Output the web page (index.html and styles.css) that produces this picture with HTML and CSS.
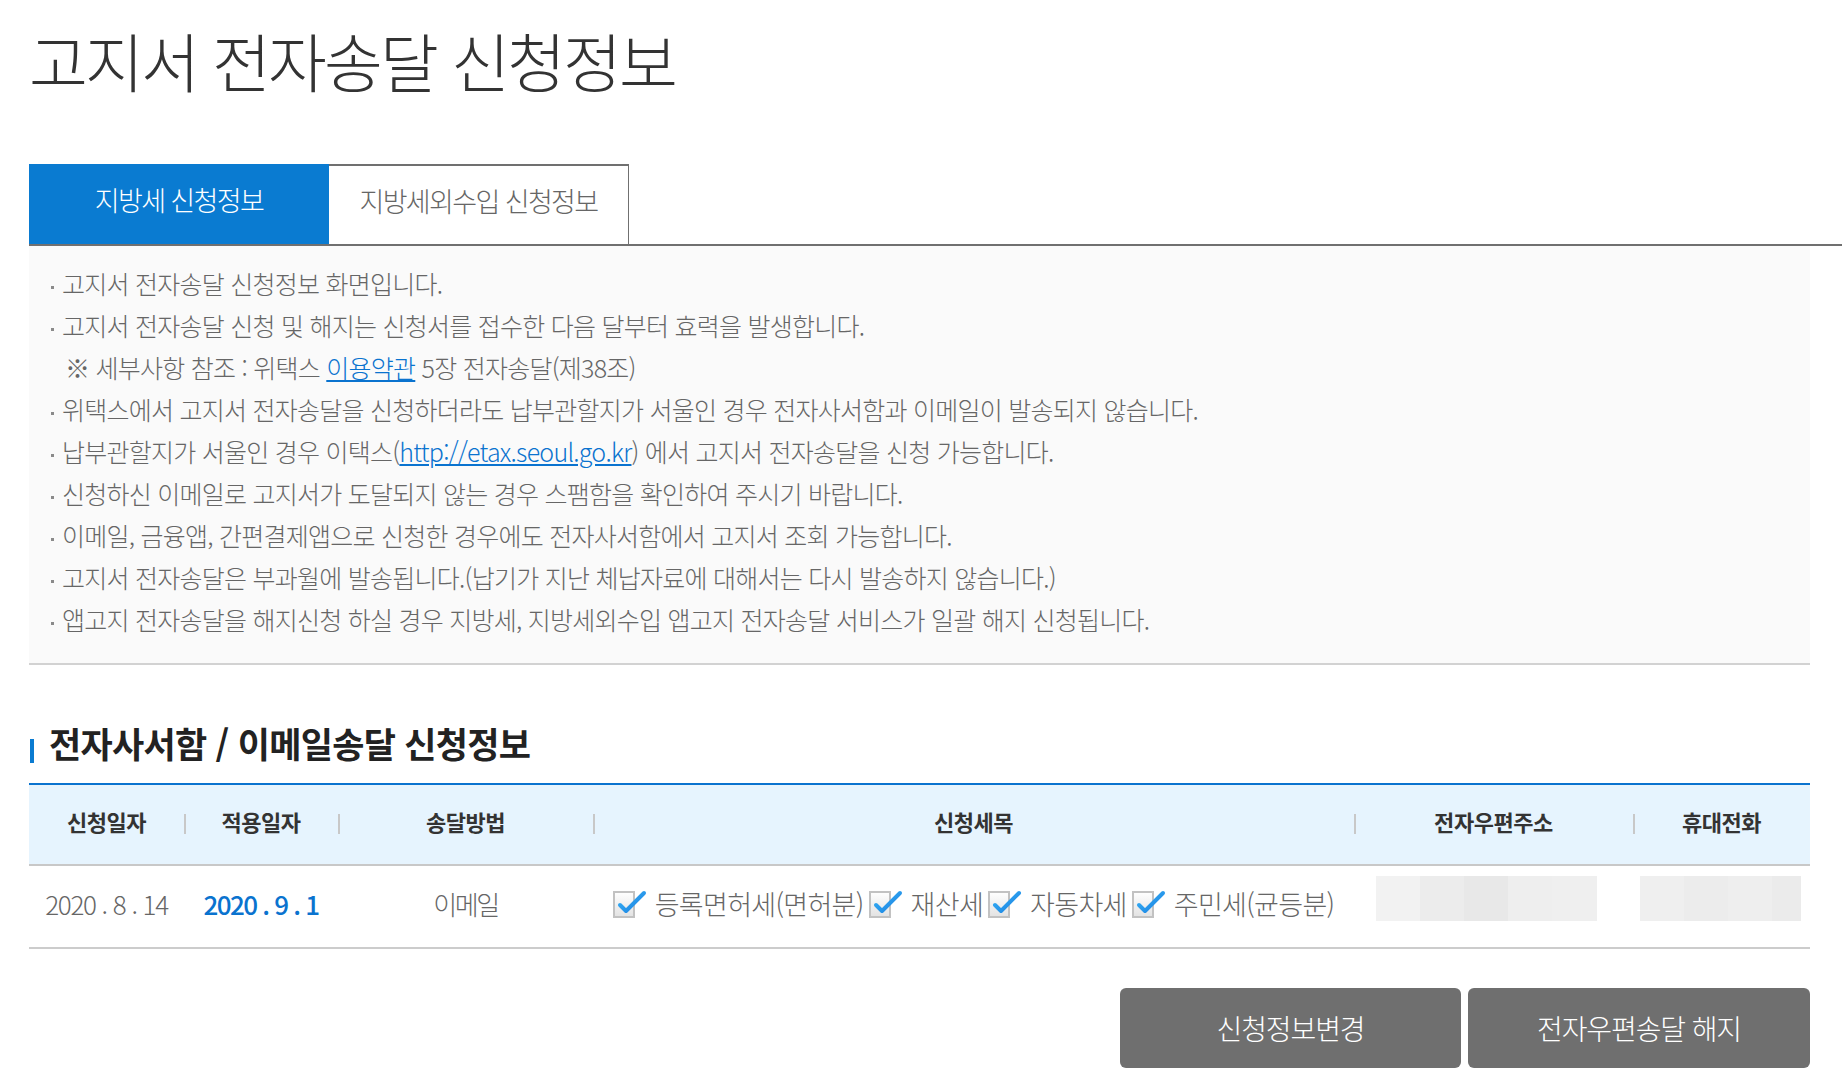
FILE: index.html
```html
<!DOCTYPE html>
<html lang="ko">
<head>
<meta charset="utf-8">
<title>고지서 전자송달 신청정보</title>
<link rel="stylesheet" href="styles.css">
</head>
<body>
<div class="wrap">
  <h1 class="page-title">고지서 전자송달 신청정보</h1>

  <div class="tabs">
    <div class="tab tab-active">지방세 신청정보</div>
    <div class="tab">지방세외수입 신청정보</div>
  </div>

  <ul class="info">
    <li>고지서 전자송달 신청정보 화면입니다.</li>
    <li>고지서 전자송달 신청 및 해지는 신청서를 접수한 다음 달부터 효력을 발생합니다.</li>
    <li class="note">※ 세부사항 참조 : 위택스 <a href="#" class="link">이용약관</a> 5장 전자송달(제38조)</li>
    <li>위택스에서 고지서 전자송달을 신청하더라도 납부관할지가 서울인 경우 전자사서함과 이메일이 발송되지 않습니다.</li>
    <li>납부관할지가 서울인 경우 이택스(<a href="#" class="link">http://etax.seoul.go.kr</a>) 에서 고지서 전자송달을 신청 가능합니다.</li>
    <li>신청하신 이메일로 고지서가 도달되지 않는 경우 스팸함을 확인하여 주시기 바랍니다.</li>
    <li>이메일, 금융앱, 간편결제앱으로 신청한 경우에도 전자사서함에서 고지서 조회 가능합니다.</li>
    <li>고지서 전자송달은 부과월에 발송됩니다.(납기가 지난 체납자료에 대해서는 다시 발송하지 않습니다.)</li>
    <li>앱고지 전자송달을 해지신청 하실 경우 지방세, 지방세외수입 앱고지 전자송달 서비스가 일괄 해지 신청됩니다.</li>
  </ul>

  <h2 class="sec-title"><span class="sec-bar"></span><span>전자사서함 / 이메일송달 신청정보</span></h2>

  <div class="grid">
    <div class="row head">
      <div class="cell">신청일자</div>
      <div class="cell sep">적용일자</div>
      <div class="cell sep">송달방법</div>
      <div class="cell sep">신청세목</div>
      <div class="cell sep">전자우편주소</div>
      <div class="cell sep">휴대전화</div>
    </div>
    <div class="row body">
      <div class="cell date">2020 . 8 . 14</div>
      <div class="cell date blue">2020 . 9 . 1</div>
      <div class="cell">이메일</div>
      <div class="cell taxes">
        <svg class="defs" width="0" height="0"><defs><linearGradient id="bx" x1="0" y1="0" x2="0" y2="1"><stop offset="0" stop-color="#ffffff"/><stop offset="1" stop-color="#e2e2e2"/></linearGradient><linearGradient id="ck" x1="0" y1="0" x2="1" y2="1"><stop offset="0" stop-color="#38b4f7"/><stop offset="1" stop-color="#1a7fe0"/></linearGradient></defs></svg>
        <span class="chk"><svg width="34" height="28" viewBox="0 0 34 28"><rect x="1" y="2" width="20" height="25" fill="url(#bx)" stroke="#c2c2c2" stroke-width="2"/><path d="M7 15 L13 21 L31 3" fill="none" stroke="url(#ck)" stroke-width="4" stroke-linecap="round" stroke-linejoin="round"/></svg></span><span class="tx">등록면허세(면허분)</span>
        <span class="chk"><svg width="34" height="28" viewBox="0 0 34 28"><rect x="1" y="2" width="20" height="25" fill="url(#bx)" stroke="#c2c2c2" stroke-width="2"/><path d="M7 15 L13 21 L31 3" fill="none" stroke="url(#ck)" stroke-width="4" stroke-linecap="round" stroke-linejoin="round"/></svg></span><span class="tx">재산세</span>
        <span class="chk"><svg width="34" height="28" viewBox="0 0 34 28"><rect x="1" y="2" width="20" height="25" fill="url(#bx)" stroke="#c2c2c2" stroke-width="2"/><path d="M7 15 L13 21 L31 3" fill="none" stroke="url(#ck)" stroke-width="4" stroke-linecap="round" stroke-linejoin="round"/></svg></span><span class="tx">자동차세</span>
        <span class="chk"><svg width="34" height="28" viewBox="0 0 34 28"><rect x="1" y="2" width="20" height="25" fill="url(#bx)" stroke="#c2c2c2" stroke-width="2"/><path d="M7 15 L13 21 L31 3" fill="none" stroke="url(#ck)" stroke-width="4" stroke-linecap="round" stroke-linejoin="round"/></svg></span><span class="tx last">주민세(균등분)</span>
      </div>
      <div class="cell masked email">
        <span class="blk" style="background:#f2f2f2"></span><span class="blk" style="background:#ececec"></span><span class="blk" style="background:#e8e8e8"></span><span class="blk" style="background:#eeeeee"></span><span class="blk" style="background:#efefef"></span>
      </div>
      <div class="cell masked phone">
        <span class="blk" style="background:#efefef"></span><span class="blk" style="background:#ececec"></span><span class="blk" style="background:#eeeeee"></span><span class="blk short" style="background:#ebebeb"></span>
      </div>
    </div>
  </div>

  <div class="actions">
    <button class="btn" type="button">신청정보변경</button>
    <button class="btn" type="button">전자우편송달 해지</button>
  </div>
</div>
</body>
</html>
```

FILE: styles.css
```css
html, body {
  margin: 0;
  padding: 0;
  background: #ffffff;
}
body {
  font-family: "Noto Sans CJK KR", "Noto Sans", sans-serif;
  color: #333;
  overflow-x: hidden;
}
.wrap {
  padding: 0 32px 0 29px;
}
.page-title {
  margin: 0;
  padding-top: 19px;
  font-size: 64px;
  line-height: 80px;
  font-weight: 300;
  letter-spacing: -0.045em;
  color: #333;
}
.tabs {
  display: flex;
  margin-top: 65px;
  margin-right: -32px;
  border-bottom: 2px solid #707070;
}
.tab {
  box-sizing: border-box;
  width: 300px;
  height: 80px;
  padding-bottom: 10px;
  display: flex;
  align-items: center;
  justify-content: center;
  font-size: 27px;
  font-weight: 300;
  letter-spacing: -0.06em;
  color: #666;
  background: #fff;
  border-top: 2px solid #707070;
  border-right: 1px solid #707070;
}
.tab-active {
  background: #0a7bd1;
  color: #fff;
  border: 0;
}
.info {
  list-style: none;
  margin: 0;
  padding: 16px 0 22px;
  background: #fafafa;
  border-bottom: 2px solid #d2d2d2;
  height: 379px;
  box-sizing: content-box;
}
.info li {
  padding-left: 22px;
  font-size: 25px;
  line-height: 42px;
  font-weight: 300;
  letter-spacing: -0.03em;
  color: #666;
  white-space: nowrap;
}
.info li::before {
  content: "";
  display: inline-block;
  width: 3px;
  height: 3px;
  background: #8a8a8a;
  margin-right: 8px;
  vertical-align: middle;
}
.info li.note {
  padding-left: 36px;
}
.info li.note::before {
  display: none;
}
.link {
  color: #0a73cf;
  text-decoration: underline;
}
.sec-title {
  display: flex;
  align-items: center;
  gap: 15px;
  margin: 56px 0 18px;
  font-size: 35px;
  line-height: 44px;
  font-weight: 700;
  letter-spacing: -0.02em;
  color: #222;
}
.sec-bar {
  width: 4px;
  height: 24px;
  background: #0a7bd1;
  margin-top: 15px;
  margin-left: 1px;
}
.grid {
  border-top: 2px solid #0a73cf;
}
.row {
  display: grid;
  grid-template-columns: 155px 154px 255px 761px 279px 177px;
}
.row.head {
  height: 79px;
  background: #e6f4fe;
  border-bottom: 2px solid #c8c8c8;
}
.row.body {
  height: 81px;
  border-bottom: 2px solid #cccccc;
}
.cell {
  display: flex;
  align-items: center;
  justify-content: center;
  white-space: nowrap;
  box-sizing: border-box;
}
.head .cell {
  font-size: 22px;
  font-weight: 700;
  letter-spacing: -0.02em;
  color: #333;
  padding-bottom: 8px;
}
.head .cell.sep {
  background: linear-gradient(#c8c8c8, #c8c8c8) left 0 top 29px / 2px 20px no-repeat;
}
.body .cell {
  font-size: 26px;
  font-weight: 300;
  letter-spacing: -0.09em;
  color: #666;
  padding-bottom: 6px;
}
.body .cell.date {
  letter-spacing: -0.05em;
}
.body .cell.blue {
  color: #0a73cf;
  font-weight: 500;
  letter-spacing: -0.06em;
}
.body .cell.taxes {
  font-size: 27px;
  letter-spacing: -0.025em;
}
.taxes .defs {
  position: absolute;
  width: 0;
  height: 0;
}
.taxes .chk {
  display: flex;
  margin-right: 8px;
}
.taxes .tx {
  margin-right: 5px;
}
.taxes .tx.last {
  margin-right: 0;
}
.body .cell.masked {
  align-items: flex-start;
  padding: 10px 0 0;
}
.masked .blk {
  display: block;
  width: 44px;
  height: 45px;
}
.body .cell.email {
  justify-content: flex-start;
  padding-left: 22px;
}
.masked.email .blk:last-child {
  width: 45px;
}
.body .cell.phone {
  justify-content: flex-start;
  padding-left: 7px;
}
.masked .blk.short {
  width: 29px;
}
.actions {
  display: flex;
  justify-content: flex-end;
  gap: 7px;
  margin-top: 39px;
}
.btn {
  width: 342px;
  height: 80px;
  border: 0;
  border-radius: 6px;
  background: #6f6f6f;
  color: #fff;
  font-family: "Noto Sans CJK KR", "Noto Sans", sans-serif;
  font-size: 28px;
  font-weight: 300;
  letter-spacing: -0.04em;
  cursor: pointer;
}
.btn:first-child {
  width: 341px;
}
```
